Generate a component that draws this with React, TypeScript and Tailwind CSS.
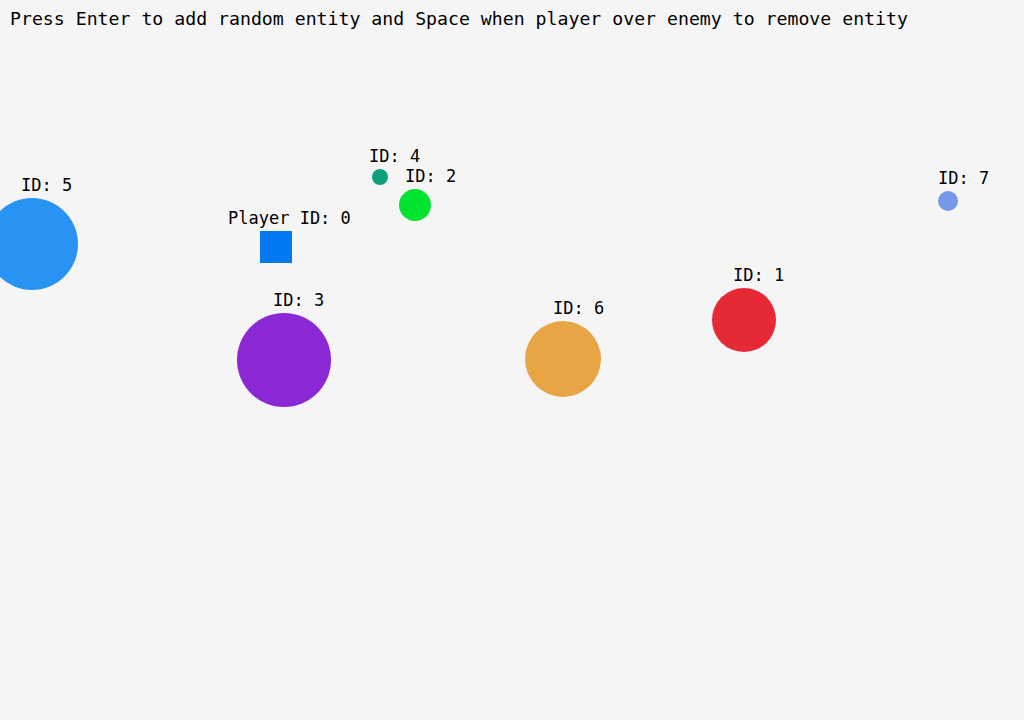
type Entity = {
  id: number;
  x: number;
  y: number;
  r: number;
  color: string;
  lx: number;
  ly: number;
};

// Enemy circles: center, radius, colour and where the label sits (left, cap top)
const enemies: Entity[] = [
  { id: 5, x: 32, y: 244, r: 46, color: "#2893F2", lx: 21, ly: 178 },
  { id: 4, x: 380, y: 177, r: 8, color: "#109E7C", lx: 369, ly: 149 },
  { id: 2, x: 415, y: 205, r: 16, color: "#00E430", lx: 405, ly: 169 },
  { id: 3, x: 284, y: 360, r: 47, color: "#8A28D5", lx: 273, ly: 293 },
  { id: 6, x: 563, y: 359, r: 38, color: "#E8A546", lx: 553, ly: 301 },
  { id: 1, x: 744, y: 320, r: 32, color: "#E62937", lx: 733, ly: 268 },
  { id: 7, x: 948, y: 201, r: 10, color: "#7698E8", lx: 938, ly: 171 },
];

const font = "font-['DejaVu_Sans_Mono','Liberation_Mono',monospace]";

function Label({ x, y, text }: { x: number; y: number; text: string }) {
  return (
    <div
      className={`absolute text-[17px] leading-none text-black whitespace-nowrap ${font}`}
      style={{ left: x, top: y - 1 }}
    >
      {text}
    </div>
  );
}

export default function App() {
  return (
    <div className="relative w-[1024px] h-[720px] overflow-hidden bg-[#f5f5f5]">
      <div className={`pl-[10px] pt-[10px] text-[18.2px] leading-none text-black whitespace-nowrap ${font}`}>
        Press Enter to add random entity and Space when player over enemy to remove entity
      </div>

      {enemies.map((e) => (
        <div key={e.id}>
          <div
            className="absolute rounded-full"
            style={{
              left: e.x - e.r,
              top: e.y - e.r,
              width: e.r * 2,
              height: e.r * 2,
              background: e.color,
            }}
          />
          <Label x={e.lx} y={e.ly} text={`ID: ${e.id}`} />
        </div>
      ))}

      {/* player */}
      <div className="absolute left-[260px] top-[231px] w-[32px] h-[32px] bg-[#0079F1]" />
      <Label x={228} y={211} text="Player ID: 0" />
    </div>
  );
}
